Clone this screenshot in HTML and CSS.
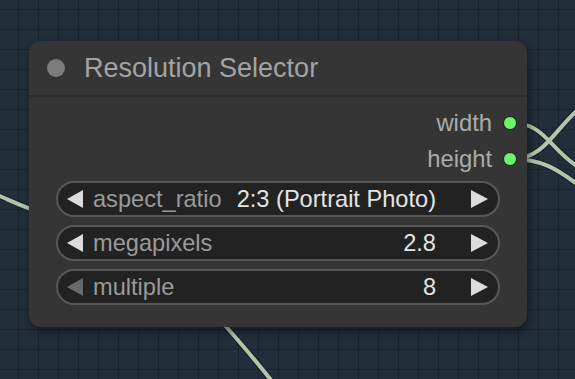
FILE: index.html
```html
<!DOCTYPE html>
<html>
<head>
<meta charset="utf-8">
<link rel="stylesheet" href="styles.css">
</head>
<body>
<div class="canvas">
  <svg class="wires" width="575" height="379" viewBox="0 0 575 379">
    <g class="wire-outline">
      <path d="M-10 192 C 10 200, 20 206, 40 212"/>
      <path d="M222 322 C 240 342, 255 360, 275 385"/>
      <path d="M512 123 C 545 123, 550 150, 580 168"/>
      <path d="M512 159 C 545 159, 555 128, 580 108"/>
      <path d="M512 159 C 545 159, 560 172, 580 186"/>
    </g>
    <g class="wire">
      <path d="M-10 192 C 10 200, 20 206, 40 212"/>
      <path d="M222 322 C 240 342, 255 360, 275 385"/>
      <path d="M512 123 C 545 123, 550 150, 580 168"/>
      <path d="M512 159 C 545 159, 555 128, 580 108"/>
      <path d="M512 159 C 545 159, 560 172, 580 186"/>
    </g>
  </svg>

  <div class="node">
    <div class="node-title">
      <span class="title-dot"></span>
      <span class="title-text">Resolution Selector</span>
    </div>
    <div class="node-body">
      <div class="outputs">
        <div class="output"><span class="out-label">width</span><span class="out-dot"></span></div>
        <div class="output"><span class="out-label">height</span><span class="out-dot"></span></div>
      </div>
      <div class="widgets">
        <div class="widget">
          <span class="arrow left"></span>
          <span class="w-label">aspect_ratio</span>
          <span class="w-value">2:3 (Portrait Photo)</span>
          <span class="arrow right"></span>
        </div>
        <div class="widget">
          <span class="arrow left"></span>
          <span class="w-label">megapixels</span>
          <span class="w-value">2.8</span>
          <span class="arrow right"></span>
        </div>
        <div class="widget">
          <span class="arrow left dim"></span>
          <span class="w-label">multiple</span>
          <span class="w-value">8</span>
          <span class="arrow right"></span>
        </div>
      </div>
    </div>
  </div>
</div>
</body>
</html>
```

FILE: styles.css
```css
html, body {
  margin: 0;
  padding: 0;
}

body {
  width: 575px;
  height: 379px;
  overflow: hidden;
  background-color: #222e39;
  font-family: "Liberation Sans", Arial, sans-serif;
}

.canvas {
  position: relative;
  width: 575px;
  height: 379px;
  background-image:
    linear-gradient(to right, rgba(10, 18, 25, 0.35) 1px, transparent 1px),
    linear-gradient(to bottom, rgba(10, 18, 25, 0.35) 1px, transparent 1px);
  background-size: 20px 20px;
  background-position: 18px 9px;
}

.wires {
  position: absolute;
  left: 0;
  top: 0;
}

.wire-outline path {
  fill: none;
  stroke: #17202a;
  stroke-width: 6;
}

.wire path {
  fill: none;
  stroke: #b3c4ad;
  stroke-width: 4;
}

.node {
  position: absolute;
  left: 29px;
  top: 41px;
  width: 498px;
  height: 286px;
  background: #353535;
  border-radius: 12px;
  box-shadow: 2px 4px 10px rgba(0, 0, 0, 0.45);
  display: flex;
  flex-direction: column;
}

.node-title {
  height: 54px;
  display: flex;
  align-items: center;
  padding-left: 18px;
  border-bottom: 2px solid #2c2c2c;
}

.title-dot {
  width: 18px;
  height: 18px;
  border-radius: 50%;
  background: #7c7c7c;
  margin-right: 19px;
}

.title-text {
  font-size: 27px;
  color: #a3a3a3;
}

.node-body {
  padding: 8px 27px 0 27px;
  display: flex;
  flex-direction: column;
}

.outputs {
  display: flex;
  flex-direction: column;
}

.output {
  height: 36px;
  display: flex;
  align-items: center;
  justify-content: flex-end;
  margin-right: -17px;
}

.out-label {
  font-size: 23.8px;
  color: #ababab;
  margin-right: 11px;
}

.out-dot {
  width: 12px;
  height: 12px;
  border-radius: 50%;
  background: #6bf56b;
  border: 1.5px solid #1c1c1c;
}

.widgets {
  margin-top: 4px;
  display: flex;
  flex-direction: column;
  gap: 8px;
}

.widget {
  height: 32px;
  border: 2px solid #575757;
  border-radius: 18px;
  background: #222222;
  display: flex;
  align-items: center;
  padding: 0 10px 0 9px;
  font-size: 23.6px;
}

.arrow {
  width: 0;
  height: 0;
  border-top: 9px solid transparent;
  border-bottom: 9px solid transparent;
}

.arrow.left {
  border-right: 16px solid #dcdcdc;
  margin-right: 10px;
}

.arrow.left.dim {
  border-right-color: #6a6a6a;
}

.arrow.right {
  border-left: 17px solid #dcdcdc;
  margin-left: 35px;
}

.w-label {
  color: #9a9a9a;
  flex: 1;
  white-space: nowrap;
}

.w-value {
  color: #e4e4e4;
  white-space: nowrap;
}
```
